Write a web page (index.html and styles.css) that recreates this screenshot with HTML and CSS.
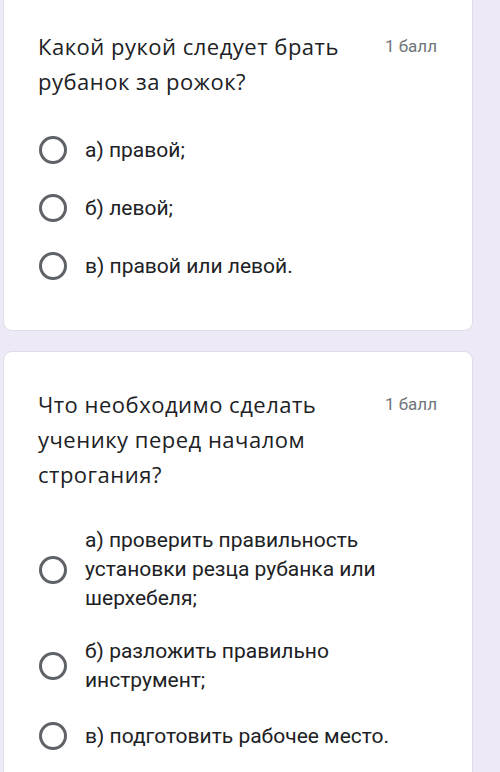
FILE: index.html
```html
<!DOCTYPE html>
<html lang="ru">
<head>
<meta charset="UTF-8">
<meta name="viewport" content="width=device-width, initial-scale=1.0">
<title>Тест</title>
<link rel="stylesheet" href="styles.css">
</head>
<body>

<div class="form">
  <div class="card card-first">
    <div class="question-head">
      <div class="question-title">Какой рукой следует брать рубанок за рожок?</div>
      <div class="points">1 балл</div>
    </div>
    <div class="options">
      <label class="option"><span class="radio"></span><span class="option-text">а) правой;</span></label>
      <label class="option"><span class="radio"></span><span class="option-text">б) левой;</span></label>
      <label class="option"><span class="radio"></span><span class="option-text">в) правой или левой.</span></label>
    </div>
  </div>

  <div class="card">
    <div class="question-head">
      <div class="question-title">Что необходимо сделать ученику перед началом строгания?</div>
      <div class="points">1 балл</div>
    </div>
    <div class="options">
      <label class="option"><span class="radio"></span><span class="option-text">а) проверить правильность установки резца рубанка или шерхебеля;</span></label>
      <label class="option"><span class="radio"></span><span class="option-text">б) разложить правильно инструмент;</span></label>
      <label class="option"><span class="radio"></span><span class="option-text">в) подготовить рабочее место.</span></label>
    </div>
  </div>
</div>

</body>
</html>
```

FILE: styles.css
```css
/* General Styles */
html,
body {
  height: 100%;
}

body {
  margin: 0;
  padding: 0;
  background-color: #ede9f7;
  font-family: Roboto, "Noto Sans", sans-serif;
  color: #202124;
  overflow: hidden;
}

.form {
  height: 100%;
  overflow: hidden;
  padding: 0 27px 0 3px;
}

.card {
  background-color: #fff;
  border: 1px solid #dfdde6;
  border-radius: 9px;
  padding: 35px 35px 35px 34px;
  margin-bottom: 20px;
}

.card-first {
  margin-top: -7px;
  border-top: none;
  border-top-left-radius: 0;
  border-top-right-radius: 0;
  padding-top: 36px;
}

.question-head {
  display: flex;
  align-items: flex-start;
  gap: 20px;
}

.question-title {
  flex: 1;
  font-family: "Open Sans", sans-serif;
  font-size: 22px;
  letter-spacing: 0.5px;
  line-height: 35px;
  color: #202124;
}

.points {
  font-size: 17px;
  line-height: 35px;
  color: #70757a;
  white-space: nowrap;
}

.options {
  margin-top: 22px;
}

.option {
  display: flex;
  align-items: center;
  gap: 18px;
  padding: 12px 0;
}

.radio {
  flex: none;
  width: 22px;
  height: 22px;
  margin: 3px 0 3px 1px;
  border: 3px solid #5f6368;
  border-radius: 50%;
}

.option-text {
  font-size: 21px;
  line-height: 29px;
  max-width: 340px;
}
```
